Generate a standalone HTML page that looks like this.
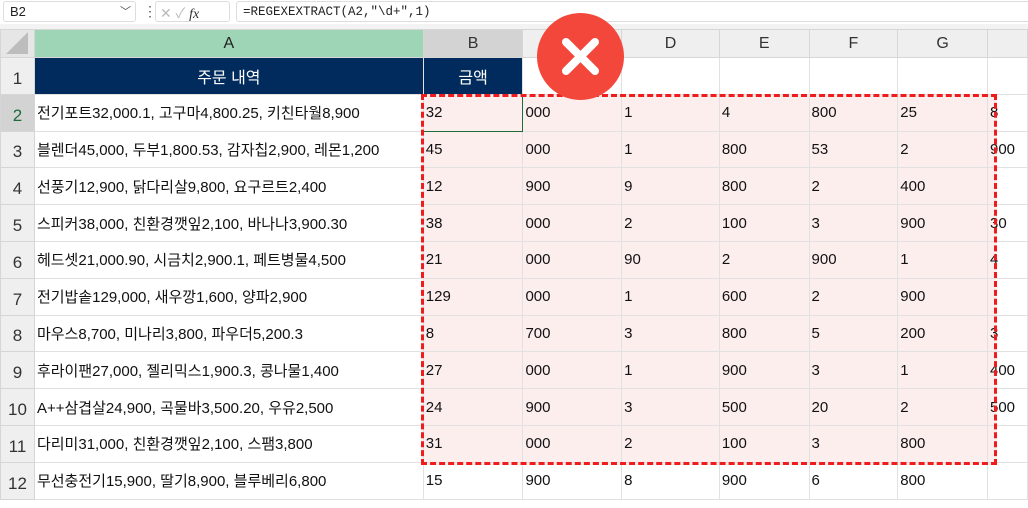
<!DOCTYPE html>
<html><head><meta charset="utf-8"><style>
*{margin:0;padding:0;box-sizing:border-box}
body{width:1028px;height:508px;overflow:hidden;background:#fff;font-family:"Liberation Sans","Noto Sans CJK KR",sans-serif;position:relative}
.fb{position:absolute;left:0;top:0;width:1028px;height:24px;background:#fff}
.nb{position:absolute;left:3px;top:1px;width:133px;height:21px;border:1px solid #ddd;border-radius:3px;font-size:13px;padding:2px 6px;color:#222}
.fx{position:absolute;left:236px;top:1px;width:800px;height:21px;border:1px solid #ddd;border-radius:3px;font-family:"Liberation Mono",monospace;font-size:12.5px;padding:3px 6px;color:#222}
.gap{position:absolute;left:0;top:24px;width:1028px;height:5px;background:#f3f3f3}
table{position:absolute;left:0;top:29px;border-collapse:collapse;table-layout:fixed}
td{border:1px solid #e1e1e1;font-size:15px;color:#111;white-space:nowrap;overflow:visible;padding:0 2px;height:36.8px}
tr.h td{height:28px;background:#efefef;text-align:center;color:#333;font-size:16px;border-color:#d6d6d6}
td.rh{background:#efefef;text-align:center;color:#333;font-size:17px;border-color:#d6d6d6;padding-top:6px}
tr.h td.sa{background:#9fd5b7;color:#222}
tr.h td.sb{background:#d3d3d3}
td.rs{background:#d3d3d3;color:#1e6b3a}
td.hd{background:#002b5c;color:#fff;text-align:center;font-size:16px}
.fill{position:absolute;left:421px;top:94px;width:576px;height:371px;background:#fdeeee}
.box{position:absolute;left:421px;top:94px;width:576px;height:371px;border:3px dashed #ee1c1c}
.x{position:absolute;left:537px;top:13px;width:87px;height:87px;border-radius:50%;background:#f4473b}
</style></head><body>
<div class="fb"><div class="nb">B2<span style="position:absolute;right:4px;top:1px;font-size:11px;color:#555">﹀</span></div>
<div style="position:absolute;left:143px;top:3px;font-size:14px;color:#555">⋮</div>
<div style="position:absolute;left:155px;top:1px;width:75px;height:21px;border:1px solid #ddd;border-radius:3px;font-size:14px;color:#bbb;padding:1px 4px">✕ ✓ <i style="color:#333;font-family:'Liberation Serif',serif">fx</i></div>
<div class="fx">=REGEXEXTRACT(A2,"\d+",1)</div></div>
<div class="gap"></div>
<div class="fill"></div>
<table>
<colgroup><col style="width:34px"><col style="width:389px"><col style="width:100px"><col style="width:99px"><col style="width:98px"><col style="width:90px"><col style="width:89px"><col style="width:90px"><col style="width:40px"></colgroup>
<tr class="h"><td style="background:#e6e6e6"></td><td class="sa">A</td><td class="sb">B</td><td>C</td><td>D</td><td>E</td><td>F</td><td>G</td><td></td></tr>
<tr><td class="rh">1</td><td class="hd">주문 내역</td><td class="hd">금액</td><td></td><td></td><td></td><td></td><td></td><td></td></tr>
<tr><td class="rh rs">2</td><td>전기포트32,000.1, 고구마4,800.25, 키친타월8,900</td><td style="border:1px solid #1e6b3a">32</td><td>000</td><td>1</td><td>4</td><td>800</td><td>25</td><td>8</td></tr>
<tr><td class="rh">3</td><td>블렌더45,000, 두부1,800.53, 감자칩2,900, 레몬1,200</td><td>45</td><td>000</td><td>1</td><td>800</td><td>53</td><td>2</td><td>900</td></tr>
<tr><td class="rh">4</td><td>선풍기12,900, 닭다리살9,800, 요구르트2,400</td><td>12</td><td>900</td><td>9</td><td>800</td><td>2</td><td>400</td><td></td></tr>
<tr><td class="rh">5</td><td>스피커38,000, 친환경깻잎2,100, 바나나3,900.30</td><td>38</td><td>000</td><td>2</td><td>100</td><td>3</td><td>900</td><td>30</td></tr>
<tr><td class="rh">6</td><td>헤드셋21,000.90, 시금치2,900.1, 페트병물4,500</td><td>21</td><td>000</td><td>90</td><td>2</td><td>900</td><td>1</td><td>4</td></tr>
<tr><td class="rh">7</td><td>전기밥솥129,000, 새우깡1,600, 양파2,900</td><td>129</td><td>000</td><td>1</td><td>600</td><td>2</td><td>900</td><td></td></tr>
<tr><td class="rh">8</td><td>마우스8,700, 미나리3,800, 파우더5,200.3</td><td>8</td><td>700</td><td>3</td><td>800</td><td>5</td><td>200</td><td>3</td></tr>
<tr><td class="rh">9</td><td>후라이팬27,000, 젤리믹스1,900.3, 콩나물1,400</td><td>27</td><td>000</td><td>1</td><td>900</td><td>3</td><td>1</td><td>400</td></tr>
<tr><td class="rh">10</td><td>A++삼겹살24,900, 곡물바3,500.20, 우유2,500</td><td>24</td><td>900</td><td>3</td><td>500</td><td>20</td><td>2</td><td>500</td></tr>
<tr><td class="rh">11</td><td>다리미31,000, 친환경깻잎2,100, 스팸3,800</td><td>31</td><td>000</td><td>2</td><td>100</td><td>3</td><td>800</td><td></td></tr>
<tr><td class="rh">12</td><td>무선충전기15,900, 딸기8,900, 블루베리6,800</td><td>15</td><td>900</td><td>8</td><td>900</td><td>6</td><td>800</td><td></td></tr>
</table>
<div style="position:absolute;left:6px;top:32px;width:0;height:0;border-left:22px solid transparent;border-bottom:22px solid #bdbdbd"></div>
<div class="box"></div>
<div class="x"><svg width="87" height="87" viewBox="0 0 87 87"><path d="M29 29L58 58M58 29L29 58" stroke="#fff" stroke-width="8" stroke-linecap="round"/></svg></div>
</body></html>
